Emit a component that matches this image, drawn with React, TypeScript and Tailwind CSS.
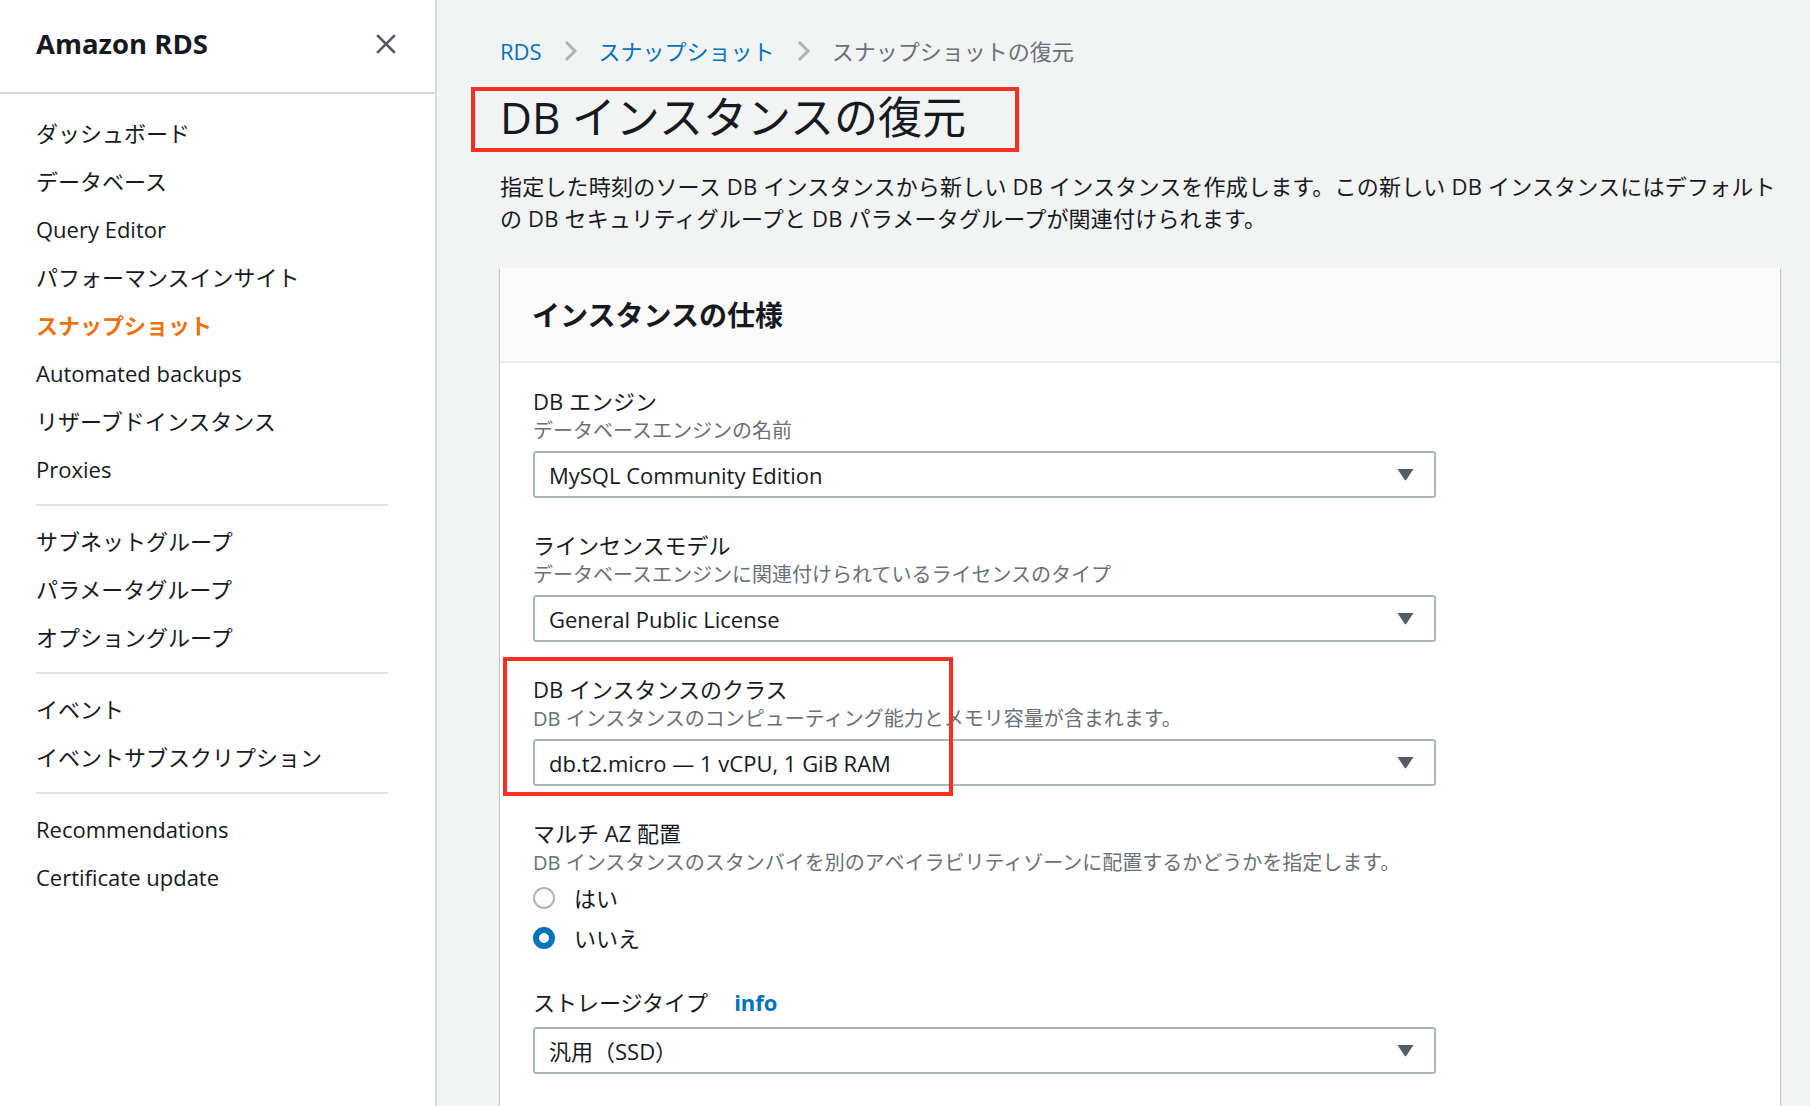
import React from "react";

const navGroups: { label: string; active?: boolean }[][] = [
  [
    { label: "ダッシュボード" },
    { label: "データベース" },
    { label: "Query Editor" },
    { label: "パフォーマンスインサイト" },
    { label: "スナップショット", active: true },
    { label: "Automated backups" },
    { label: "リザーブドインスタンス" },
    { label: "Proxies" },
  ],
  [{ label: "サブネットグループ" }, { label: "パラメータグループ" }, { label: "オプショングループ" }],
  [{ label: "イベント" }, { label: "イベントサブスクリプション" }],
  [{ label: "Recommendations" }, { label: "Certificate update" }],
];

function Chevron() {
  return (
    <svg width="15" height="22" viewBox="0 0 15 22" className="mx-[21px] shrink-0">
      <polyline points="3,2 12,11 3,20" fill="none" stroke="#aab7b8" strokeWidth="3" />
    </svg>
  );
}

function Select({ value }: { value: string }) {
  return (
    <div className="flex h-[47px] w-[903px] items-center justify-between rounded-[3px] border-2 border-[#aab7b8] bg-white pl-[14px] pr-[20px]">
      <span className="text-[22px] leading-[30px] text-[#16191f]">{value}</span>
      <svg width="17" height="13" viewBox="0 0 17 13">
        <path d="M0.5 1 H16.5 L9.3 11.8 Q8.5 12.9 7.7 11.8 Z" fill="#545b64" />
      </svg>
    </div>
  );
}

function Field({
  label,
  desc,
  children,
  className = "",
}: {
  label: React.ReactNode;
  desc?: string;
  children: React.ReactNode;
  className?: string;
}) {
  return (
    <div className={"relative " + className}>
      <div className="text-[22px] leading-[32px] text-[#16191f]">{label}</div>
      {desc && <div className="text-[20px] leading-[28px] text-[#687078]">{desc}</div>}
      {children}
    </div>
  );
}

function Radio({ checked, label }: { checked?: boolean; label: string }) {
  return (
    <div className="flex h-[40px] items-center">
      <span
        className={
          checked
            ? "box-border h-[22px] w-[22px] rounded-full border-[6px] border-[#0073bb] bg-white"
            : "box-border h-[22px] w-[22px] rounded-full border-2 border-[#aab7b8] bg-white"
        }
      />
      <span className="ml-[19px] text-[22px] leading-[32px] text-[#16191f]">{label}</span>
    </div>
  );
}

export default function App() {
  return (
    <div className="flex h-[1106px] w-[1810px] overflow-hidden bg-[#f2f3f3] font-['Open_Sans','Noto_Sans_CJK_JP',sans-serif] text-[#16191f]">
      {/* Sidebar */}
      <aside className="h-full w-[437px] shrink-0 border-r-2 border-[#d5dbdb] bg-white">
        <div className="flex h-[94px] items-center justify-between border-b-2 border-[#d5dbdb] pb-[4px] pl-[36px] pr-[39px]">
          <span className="text-[27.5px] font-bold leading-[36px] text-[#16191f]">Amazon RDS</span>
          <svg width="20" height="20" viewBox="0 0 20 20">
            <path d="M2 2 L18 18 M18 2 L2 18" stroke="#545b64" strokeWidth="2.6" strokeLinecap="square" />
          </svg>
        </div>
        <nav className="pt-[15px]">
          {navGroups.map((group, gi) => (
            <div key={gi}>
              {gi > 0 && <div className="my-[11px] ml-[36px] h-[2px] w-[352px] bg-[#dfe3e3]" />}
              {group.map((item) => (
                <div
                  key={item.label}
                  className={
                    item.active
                      ? "pl-[36px] text-[22px] font-bold leading-[48px] text-[#ec7211]"
                      : "pl-[36px] text-[22px] leading-[48px] text-[#16191f]"
                  }
                >
                  {item.label}
                </div>
              ))}
            </div>
          ))}
        </nav>
      </aside>

      {/* Main */}
      <main className="flex-1 pl-[63px] pt-[35px]">
        <div className="flex h-[32px] items-center text-[22px] leading-[32px]">
          <span className="text-[#0073bb]">RDS</span>
          <Chevron />
          <span className="text-[#0073bb]">スナップショット</span>
          <Chevron />
          <span className="text-[#687078]">スナップショットの復元</span>
        </div>

        <div className="relative mt-[22px]">
          <h1 className="text-[44px] font-normal leading-[56px] text-[#16191f]">DB インスタンスの復元</h1>
          <div className="absolute left-[-29px] top-[-2px] h-[65px] w-[548px] border-4 border-[#fa2f23]" />
        </div>

        <p className="mt-[25px] text-[22px] leading-[32px] tracking-[0.2px] text-[#16191f]">
          <span className="block whitespace-nowrap">
            指定した時刻のソース DB インスタンスから新しい DB インスタンスを作成します。この新しい DB インスタンスにはデフォルト
          </span>
          <span className="block whitespace-nowrap">
            の DB セキュリティグループと DB パラメータグループが関連付けられます。
          </span>
        </p>

        <section className="mt-[34px] w-[1280px] bg-white shadow-[0_1px_1px_0_rgba(0,28,36,0.3),1px_1px_1px_0_rgba(0,28,36,0.15),-1px_1px_1px_0_rgba(0,28,36,0.15)]">
          <div className="flex h-[95px] items-center border-b-2 border-[#eaeded] bg-[#fafafa] pl-[32px]">
            <h2 className="text-[28px] font-bold leading-[36px] text-[#16191f]">インスタンスの仕様</h2>
          </div>
          <div className="pb-[60px] pl-[33px] pt-[22px]">
            <Field label="DB エンジン" desc="データベースエンジンの名前">
              <div className="mt-[6px]">
                <Select value="MySQL Community Edition" />
              </div>
            </Field>
            <Field
              className="mt-[31px]"
              label="ラインセンスモデル"
              desc="データベースエンジンに関連付けられているライセンスのタイプ"
            >
              <div className="mt-[6px]">
                <Select value="General Public License" />
              </div>
            </Field>
            <Field
              className="mt-[31px]"
              label="DB インスタンスのクラス"
              desc="DB インスタンスのコンピューティング能力とメモリ容量が含まれます。"
            >
              <div className="mt-[6px]">
                <Select value="db.t2.micro — 1 vCPU, 1 GiB RAM" />
              </div>
              <div className="absolute left-[-30px] top-[-16px] h-[139px] w-[450px] border-4 border-[#fa2f23]" />
            </Field>
            <Field
              className="mt-[31px]"
              label="マルチ AZ 配置"
              desc="DB インスタンスのスタンバイを別のアベイラビリティゾーンに配置するかどうかを指定します。"
            >
              <div className="mt-[1px]">
                <Radio label="はい" />
                <Radio checked label="いいえ" />
              </div>
            </Field>
            <Field
              className="mt-[28px]"
              label={
                <span className="flex items-center">
                  ストレージタイプ
                  <span className="ml-[26px] font-bold text-[#0073bb]">info</span>
                </span>
              }
            >
              <div className="mt-[9px]">
                <Select value="汎用（SSD）" />
              </div>
            </Field>
          </div>
        </section>
      </main>
    </div>
  );
}
